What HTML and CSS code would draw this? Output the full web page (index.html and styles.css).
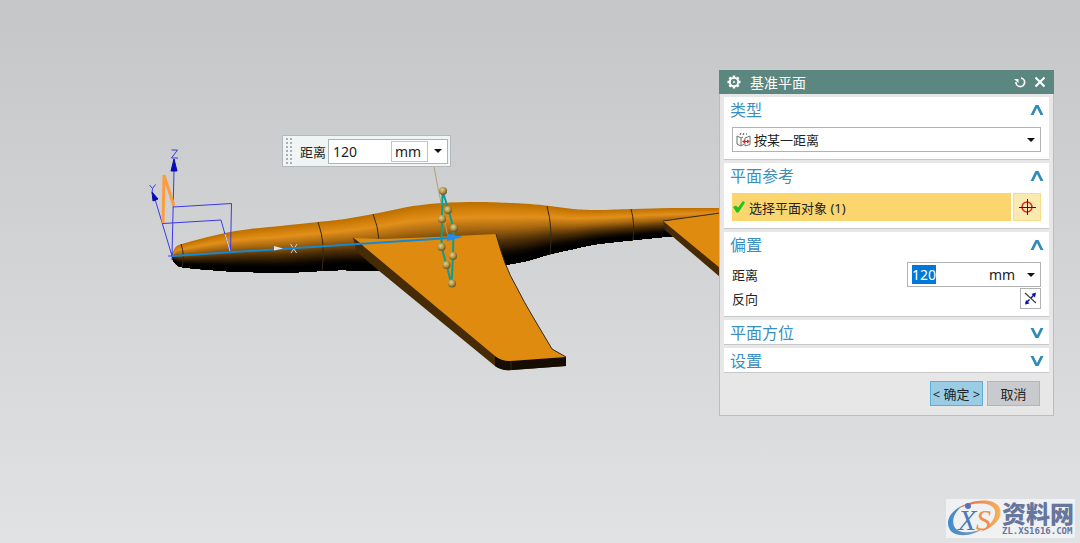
FILE: index.html
```
<!DOCTYPE html>
<html lang="zh-CN">
<head>
<meta charset="utf-8">
<title>基准平面</title>
<link rel="stylesheet" href="styles.css">
</head>
<body>

<svg class="scene" viewBox="0 0 1080 543" preserveAspectRatio="xMinYMin meet">
	<defs>
		<radialGradient id="ball" cx="0.4" cy="0.35" r="0.65">
			<stop offset="0" stop-color="#e2cf8c"/>
			<stop offset="0.5" stop-color="#b89d50"/>
			<stop offset="1" stop-color="#665425"/>
		</radialGradient>
	</defs>

	<!-- fuselage, bands are added by scene.js -->
	<g id="body"></g>
	<g class="seam">
		<path d="M181 244q4 11 1 23"/>
		<path d="M318 222q8 22 4 49"/>
		<path d="M373 214q5 12 6 26"/>
		<path d="M547 206q6 22 3 49"/>
		<path d="M631 209q4 14 2 31"/>
	</g>

	<!-- tail -->
	<path class="side" d="M663 221l2 9 55 47v-12z"/>
	<path class="face" d="M663 221l57-8v55z"/>
	<path class="seam" d="M663 221l57-8"/>

	<!-- wing -->
	<path class="side" d="M353 238l4 14 21 18 117 96q7 5 17 4l54-4v-9l-60-10z"/>
	<path class="tip" d="M495 356q6 5 15 5l56-4v9l-54 4q-11 1-17-4z"/>
	<path class="face" d="M353 238l30 1 52-2 61-3q4 15 9 29 5 13 12 25 7 14 16 29l19 32 14 8-56 4q-9 0-15-5L362 245z"/>
	<path class="seam" d="M353 238l9 7M496 234q4 15 9 29 5 13 12 25 7 14 16 29l19 32 14 8M511 361v9"/>

	<!-- coordinate system -->
	<g class="csys">
		<path d="M172 256L174 170M172 256L155 199M163 223.500l58-3.500 9 32M173 207l58.500-3.500-1 48M168 256h8M172 252v8"/>
		<path class="head" d="M174 159l3 12h-6zM152 192l6 7-5 2z"/>
		<path d="M171.500 150h6l-6 8h6.500M149.500 185l3 3.500 3-4M152.500 188.500l-.5 4"/>
	</g>
	<path class="sketch" d="M163 223l1-48 10 31"/>
	<path class="ghost" d="M225 234l5 17M290.500 244l6 9M297 244l-6 9"/>
	<path class="xaxis" d="M172 256L450 238"/>
	<path class="xhead" d="M274 246l9 2.500-9 2z"/>

	<!-- datum plane -->
	<path class="leader" d="M434 166l3 17 11 54"/>
	<path class="plane" d="M442.500 191L442 219l-.5 28 5 18 5 19 1.500-28 .5-28-5-18z"/>
	<path class="arrow" d="M447 233.500l16 3.500-16 4z"/>
	<g fill="url(#ball)">
		<circle cx="443" cy="191" r="4"/>
		<circle cx="448" cy="210" r="4"/>
		<circle cx="442" cy="219" r="4"/>
		<circle cx="454" cy="228" r="4"/>
		<circle cx="441.500" cy="247" r="4"/>
		<circle cx="453" cy="256" r="4"/>
		<circle cx="446.500" cy="265" r="4"/>
		<circle cx="452" cy="283.500" r="4"/>
	</g>
</svg>

<div class="minibar">
	<span class="grip"></span>
	<label for="mini_dist">距离</label>
	<div class="field">
		<input type="text" id="mini_dist" value="120">
		<span class="drop boxed"><select aria-label="单位"><option>mm</option></select></span>
	</div>
</div>

<form class="dialog" onsubmit="return false">
	<div class="title">
		<svg width="14" height="14" viewBox="0 0 14 14"><circle cx="7" cy="7" r="4.200" fill="none" stroke="#fff" stroke-width="2"/><circle cx="7" cy="7" r="1"  fill="#fff"/><path d="M7 .5v2M7 11.500v2M.5 7h2M11.500 7h2M2.400 2.400l1.400 1.400M10.200 10.200l1.400 1.400M2.400 11.600l1.400-1.400M10.200 3.800l1.400-1.400" stroke="#fff" stroke-width="2.400"/></svg>
		<span class="name">基准平面</span>
		<button type="button" class="tool" aria-label="重置"><svg width="12" height="12" viewBox="0 0 12 12"><path d="M7 2a4.300 4.300 0 1 1-5 4" fill="none" stroke="#fff" stroke-width="1.700"/><path d="M0 3h4.500v4z" fill="#fff"/></svg></button>
		<button type="button" class="tool" aria-label="关闭"><svg width="12" height="12" viewBox="0 0 12 12"><path d="M1.500 1.500l9 9M10.500 1.500l-9 9" stroke="#fff" stroke-width="2"/></svg></button>
	</div>

	<div class="group">
		<button type="button" class="head">类型<svg width="14" height="12" viewBox="0 0 14 12"><path d="M0.500 11L5.500 1h3l5 10h-3L7 4 3.500 11z"/></svg></button>
		<div class="rows">
			<span class="drop type">
				<svg width="15" height="15" viewBox="0 0 15 15" fill="none" stroke="#6b756b"><path d="M1 4l4 2v8L1 12zM5 6l2-1M9 6l5-2v8.500L9 14zM5 14l3-2"/><path d="M4 3l1-2M7 3l1-2M10 2h1" stroke="#444"/><path d="M7 9.500h6" stroke="#d22"/><path d="M6 9.500l3-2v4zM14 9.500l-3-2v4z" fill="#d22" stroke="none"/></svg>
				<select aria-label="类型"><option>按某一距离</option></select>
			</span>
		</div>
	</div>

	<div class="group">
		<button type="button" class="head">平面参考<svg width="14" height="12" viewBox="0 0 14 12"><path d="M0.500 11L5.500 1h3l5 10h-3L7 4 3.500 11z"/></svg></button>
		<div class="rows">
			<div class="pick">
				<button type="button" class="chosen"><svg width="12" height="12" viewBox="0 0 12 12"><path d="M0 6l3-1.500 2 2L10 0l2 1.500L5.500 11.500 3.500 11.500z" fill="#1fc41f"/></svg>选择平面对象 (1)</button>
				<button type="button" class="target" aria-label="选择"><svg width="18" height="18" viewBox="0 0 18 18" fill="none"><circle cx="9" cy="9" r="5" stroke="#e0281e" stroke-width="1.500"/><path d="M9.500 1v16M1 9.500h17" stroke="#222"/></svg></button>
			</div>
		</div>
	</div>

	<div class="group">
		<button type="button" class="head">偏置<svg width="14" height="12" viewBox="0 0 14 12"><path d="M0.500 11L5.500 1h3l5 10h-3L7 4 3.500 11z"/></svg></button>
		<div class="rows">
			<div class="row">
				<label for="dist">距离</label>
				<div class="field">
					<input type="text" id="dist" value="120">
					<span class="drop"><select aria-label="单位"><option>mm</option></select></span>
				</div>
			</div>
			<div class="row">
				<label for="flip">反向</label>
				<button type="button" class="flip" id="flip"><svg width="15" height="15" viewBox="0 0 15 15"><path d="M2 2l11 10" stroke="#444" stroke-width="1.200"/><path d="M3 12l9-9" stroke="#11a" stroke-width="1.500" stroke-dasharray="5 2"/><path d="M8.500 3L13 1.500 12 6.500zM2 13.500L3 9l3.500 3.500z" fill="#11a"/></svg></button>
			</div>
		</div>
	</div>

	<div class="group">
		<button type="button" class="head">平面方位<svg width="14" height="12" viewBox="0 0 14 12"><path d="M0.500 1L5.500 11h3l5-10h-3L7 8 3.500 1z"/></svg></button>
	</div>

	<div class="group">
		<button type="button" class="head">设置<svg width="14" height="12" viewBox="0 0 14 12"><path d="M0.500 1L5.500 11h3l5-10h-3L7 8 3.500 1z"/></svg></button>
	</div>

	<div class="actions">
		<button type="submit" class="ok">&lt; 确定 &gt;</button>
		<button type="button">取消</button>
	</div>
</form>

<div class="mark">
	<svg width="56" height="39" viewBox="0 0 56 39">
		<defs>
			<linearGradient id="ring"><stop offset="0" stop-color="#3f8fd0"/><stop offset="0.35" stop-color="#5c8cb8"/><stop offset="0.65" stop-color="#6a9cc8"/><stop offset="1" stop-color="#f2b45a"/></linearGradient>
			<linearGradient id="ring2"><stop offset="0" stop-color="#e0604c"/><stop offset="1" stop-color="#f6b45c"/></linearGradient>
		</defs>
		<path d="M18 6C7 10-1 20 3 29c4 10 24 9 35 0-11 5-26 7-30-2C5 19 11 10 18 6z" fill="url(#ring)"/>
		<path d="M13 9C26 0 50-2 54 10c3 10-7 19-20 23 8-5 16-12 15-21C47 2 27 3 13 9z" fill="url(#ring2)"/>
		<circle cx="22" cy="7" r="3" fill="#5574b8"/>
		<text x="12" y="31" class="x">X</text>
		<text x="30" y="31" class="s">S</text>
	</svg>
	<div class="words">
		<span class="cn">资料网</span>
		<span class="url">ZL.XS1616.COM</span>
	</div>
</div>

<script src="scene.js"></script>
</body>
</html>
```
FILE: styles.css
```
body {
	margin: 0;
	min-height: 100vh;
	position: relative;
	overflow: hidden;
	background: linear-gradient(#c5c6c8, #e1e2e4);
	font-family: "Noto Sans", "Noto Sans CJK SC", sans-serif;
	font-size: 13px;
	color: #222;
}
button, input, select {
	font: inherit;
	color: inherit;
	margin: 0;
	padding: 0;
	border: 0;
	border-radius: 0;
	background: none;
	outline: none;
	box-sizing: border-box;
}
svg {
	display: block;
	flex: none;
}

/* model */
.scene {
	width: 100%;
}
.face { fill: #de8b10; }
.side { fill: #472b04; }
.tip { fill: #150d02; }
.seam, .seam path {
	fill: none;
	stroke: #33291c;
	stroke-width: 1;
}
.csys path {
	fill: none;
	stroke: #3a3ae6;
	stroke-width: 1;
}
.csys .head {
	fill: #0a0ab4;
	stroke: #0a0ab4;
}
.sketch {
	fill: none;
	stroke: #ff9c40;
	stroke-width: 3;
}
.ghost {
	fill: none;
	stroke: #d8d8d8;
}
.xaxis {
	stroke: #1688d0;
	stroke-width: 2;
}
.xhead { fill: #e4e4e4; }
.leader {
	fill: none;
	stroke: #b0a274;
}
.plane {
	fill: none;
	stroke: #0b9d96;
	stroke-width: 2;
}
.arrow { fill: #1e8cf0; }

/* drop-downs */
.drop {
	position: relative;
	display: flex;
	align-items: center;
}
.drop::after {
	content: "";
	position: absolute;
	right: 5px;
	border: 4px solid transparent;
	border-top-color: #111;
	border-bottom: 0;
	pointer-events: none;
}
.drop select {
	appearance: none;
	width: 100%;
	height: 100%;
}
.field {
	display: flex;
	box-sizing: border-box;
	height: 25px;
	border: 1px solid #b0b2b4;
	background: #fff;
	font-size: 14px;
}
.field input {
	flex: 1;
	min-width: 0;
	padding-left: 4px;
}
.field .drop {
	width: 56px;
}
.field select {
	padding-left: 5px;
}
::selection {
	background: #0078d7;
	color: #fff;
}

/* floating input */
.minibar {
	position: absolute;
	left: 282px;
	top: 135px;
	display: flex;
	align-items: center;
	box-sizing: border-box;
	width: 169px;
	height: 32px;
	padding: 0 2px;
	border: 1px solid #b4b8ba;
	background: #eff5f4;
}
.minibar label {
	white-space: nowrap;
}
.grip {
	flex: none;
	width: 8px;
	height: 28px;
	margin-right: 7px;
	background: radial-gradient(#a8aeb4 1px, transparent 1px) 0 0 / 4px 4px;
}
.minibar .field {
	flex: 1;
	min-width: 0;
	margin-left: 2px;
}
.minibar .boxed {
	flex: none;
}
.minibar .boxed select {
	width: 37px;
	height: 21px;
	border: 1px solid #c4c4c4;
	padding-left: 3px;
}

/* dialog */
.dialog {
	position: absolute;
	top: 70px;
	right: 26px;
	box-sizing: border-box;
	width: 335px;
	border: 1px solid #bcbdbf;
	border-top: 0;
	background: #e7e7e7;
	padding: 0 4px 9px;
}
.title {
	display: flex;
	align-items: center;
	height: 24px;
	margin: 0 -5px 3px;
	padding: 0 8px;
	background: #5b8780;
	color: #fff;
	font-size: 14px;
}
.title .name {
	flex: 1;
	margin-left: 9px;
}
.tool {
	margin-left: 8px;
}
.group {
	margin-bottom: 3px;
	border-bottom: 1px solid #c6c7c8;
	background: #fff;
}
.group .head {
	display: flex;
	align-items: center;
	justify-content: space-between;
	width: 100%;
	height: 24px;
	padding: 1px 5px 0 6px;
	color: #3a8fc0;
	font-size: 16px;
	line-height: 24px;
}
.head svg {
	fill: #2f8cba;
}
.rows {
	padding: 6px 8px 7px;
}
.type {
	height: 25px;
	box-sizing: border-box;
	border: 1px solid #b0b2b4;
}
.type svg {
	position: absolute;
	left: 3px;
	pointer-events: none;
}
.type select {
	padding-left: 21px;
}
.pick {
	display: flex;
	gap: 2px;
}
.pick button {
	display: flex;
	align-items: center;
	height: 28px;
}
.pick .chosen {
	flex: 1;
	gap: 4px;
	padding-left: 1px;
	background: #fbd66e;
}
.pick .target {
	width: 28px;
	justify-content: center;
	border: 1px solid #f8dc84;
	background: #faeab0;
}
.row {
	display: flex;
	align-items: center;
	justify-content: space-between;
}
.row + .row {
	margin-top: 1px;
}
.row .field {
	width: 134px;
}
.flip {
	display: flex;
	align-items: center;
	justify-content: center;
	width: 21px;
	height: 21px;
	border: 1px solid #b0b2b4;
}
.actions {
	display: flex;
	justify-content: flex-end;
	gap: 4px;
	padding: 5px 9px 0 0;
}
.actions button {
	width: 53px;
	height: 25px;
	border: 1px solid #b4b5b8;
	background: #c9cacd;
	white-space: nowrap;
}
.actions .ok {
	border-color: #5aaed8;
	background: #9bcce5;
}

/* site mark */
.mark {
	position: absolute;
	right: 5px;
	bottom: 5px;
	display: flex;
	width: 129px;
	height: 39px;
	background: #f0f1f3;
}
.mark text {
	font-family: "Liberation Serif", serif;
	font-style: italic;
	font-size: 30px;
}
.mark .x { fill: #4b78bc; }
.mark .s { fill: #ef8d52; }
.words {
	display: flex;
	flex-direction: column;
	color: #66769c;
}
.cn {
	font: 900 24px/27px "Noto Sans CJK SC", sans-serif;
}
.url {
	font: bold 9px/10px "DejaVu Sans Mono", monospace;
}
```
FILE: scene.js
```
// outline of the fuselage: x, top, bottom
var outline = [
	[172,256,258],[174,250,262],[177,246,265],[182,244,267],[200,239,269],[225,233,271],
	[250,229,272],[280,226,273],[318,222,271],[345,219,270],[373,214,271],[393,210,271],
	[413,206,271],[443,203,270],[477,202,268],[510,203,264],[530,204,260],[550,206,254],
	[573,209,249],[597,210,244],[633,209,240],[673,208,236],[720,208,232]
];
// shading from top to bottom
var shade = [
	[0,190,112,0],[0.08,205,124,8],[0.22,226,144,28],[0.4,168,104,16],
	[0.6,82,50,8],[0.8,14,9,2],[0.88,0,0,0],[1,0,0,0]
];
var BANDS = 50;

function colorAt(t){
	var i = 1;
	while(shade[i][0] < t) i++;
	var a = shade[i-1], b = shade[i];
	var f = (t - a[0]) / (b[0] - a[0]);
	var c = [];
	for(var k=1;k<4;k++) c.push(Math.round(a[k] + (b[k]-a[k])*f));
	return 'rgb(' + c.join(',') + ')';
}

// smooth line through the points
function curve(pts){
	var d = '';
	for(var i=0;i<pts.length-1;i++){
		var p0 = pts[i-1] || pts[i], p1 = pts[i], p2 = pts[i+1], p3 = pts[i+2] || p2;
		d += 'C' + (p1[0]+(p2[0]-p0[0])/6) + ' ' + (p1[1]+(p2[1]-p0[1])/6)
			+ ' ' + (p2[0]-(p3[0]-p1[0])/6) + ' ' + (p2[1]-(p3[1]-p1[1])/6)
			+ ' ' + p2[0] + ' ' + p2[1];
	}
	return d;
}

function drawBody(){
	var g = document.getElementById('body');
	for(var n=0;n<BANDS;n++){
		var t = n / BANDS;
		var top = outline.map(function(p){ return [p[0], p[1] + (p[2]-p[1])*t]; });
		var low = outline.map(function(p){ return [p[0], p[2]]; }).reverse();
		var path = document.createElementNS('http://www.w3.org/2000/svg', 'path');
		path.setAttribute('d', 'M' + top[0] + curve(top) + 'L' + low[0] + curve(low) + 'Z');
		path.setAttribute('fill', colorAt(t));
		g.appendChild(path);
	}
}

drawBody();
var dist = document.getElementById('dist');
dist.focus();
dist.select();
```
